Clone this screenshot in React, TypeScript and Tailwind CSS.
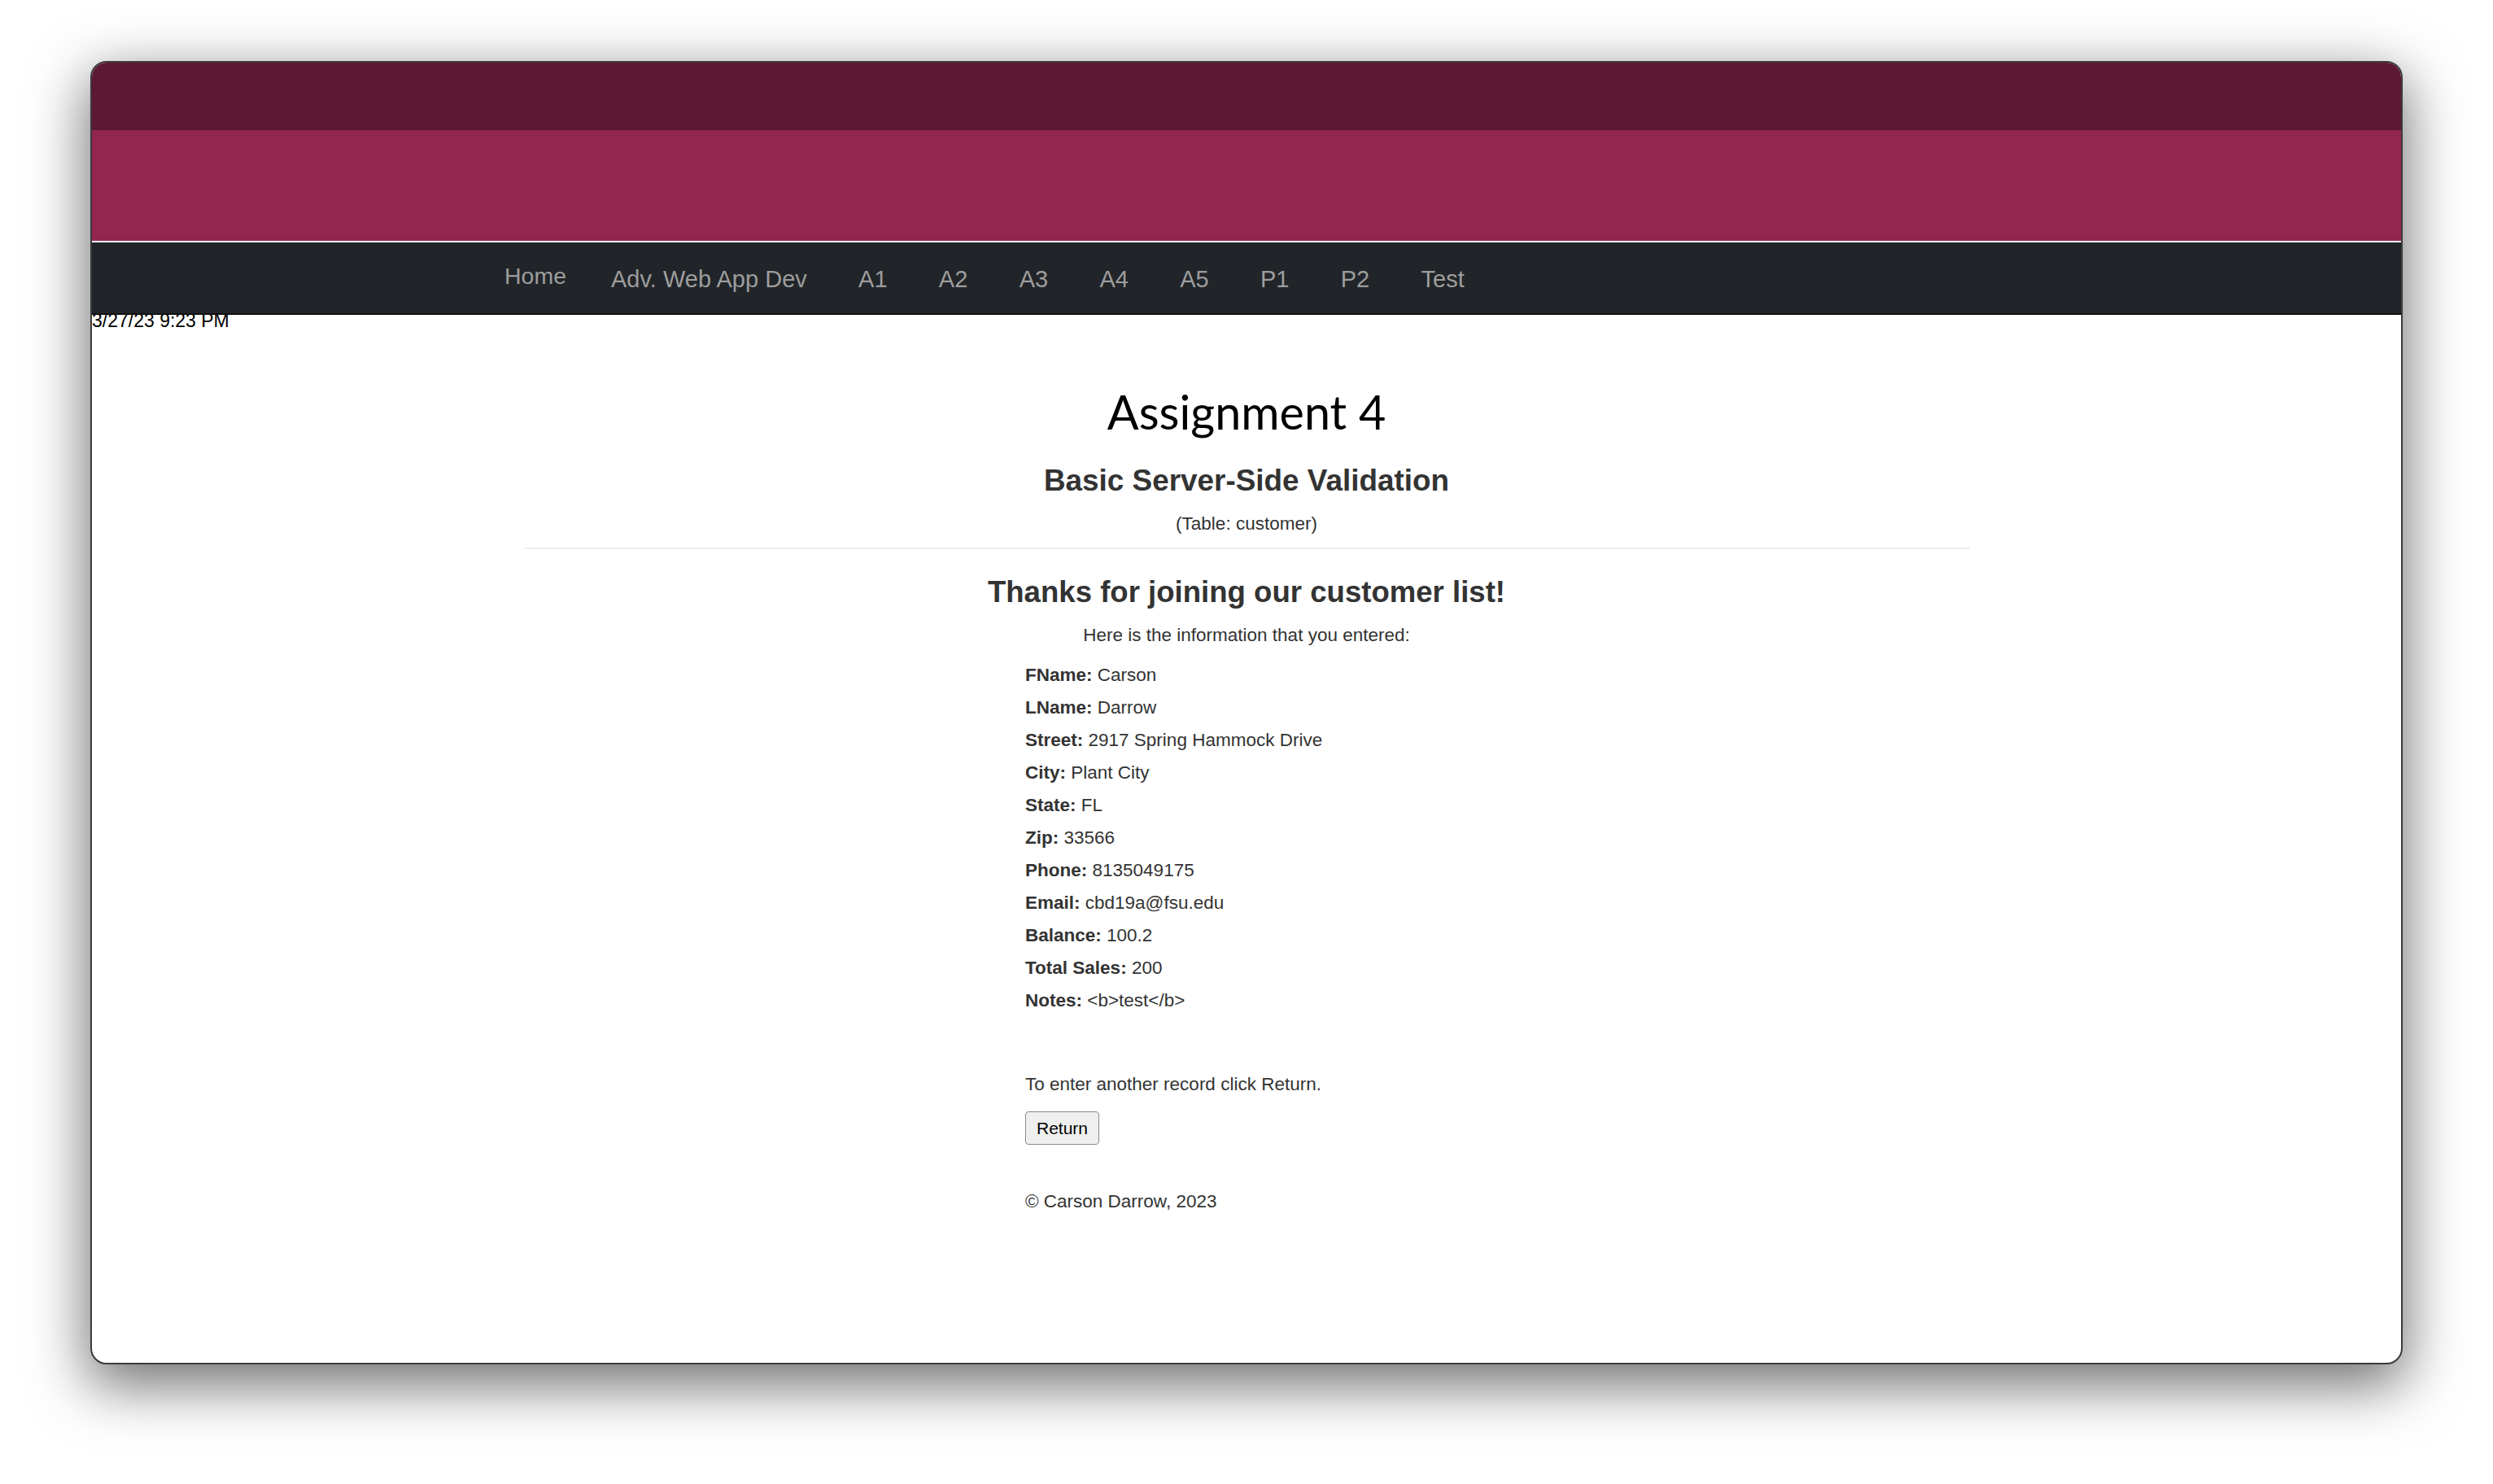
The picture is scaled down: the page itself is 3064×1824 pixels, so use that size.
const links = ["Adv. Web App Dev", "A1", "A2", "A3", "A4", "A5", "P1", "P2", "Test"];

const fields: [string, string][] = [
  ["FName", "Carson"],
  ["LName", "Darrow"],
  ["Street", "2917 Spring Hammock Drive"],
  ["City", "Plant City"],
  ["State", "FL"],
  ["Zip", "33566"],
  ["Phone", "8135049175"],
  ["Email", "cbd19a@fsu.edu"],
  ["Balance", "100.2"],
  ["Total Sales", "200"],
  ["Notes", "<b>test</b>"],
];

export default function App() {
  return (
    <div className="min-h-screen w-full bg-white pt-[75px] font-['Liberation_Sans',Arial,sans-serif]">
      <div className="mx-auto h-[1602px] w-[2842px] overflow-hidden rounded-[20px] border-2 border-[#3b3b3b] bg-white shadow-[0_22px_70px_4px_rgba(0,0,0,0.56)]">
        {/* banner */}
        <div className="h-[83px] bg-[#5d1833]" />
        <div className="h-[138px] border-b-2 border-white bg-[#92264e]" />

        <nav className="relative z-10 flex h-[89px] items-center border-b-2 border-[#111] bg-[#212529] pl-[507px] pt-[3px] text-[29px] leading-none text-[#9d9d9d]">
          <a href="#" className="mr-[55px] pb-[8px] text-[28.5px]">
            Home
          </a>
          <ul className="flex gap-[63.3px]">
            {links.map((l) => (
              <li key={l}>
                <a href="#">{l}</a>
              </li>
            ))}
          </ul>
        </nav>

        <div className="-mt-[4px] text-[23px] leading-[22px] text-black">3/27/23 9:23 PM</div>

        <main className="mx-auto w-[1777px] text-[#333]">
          <h1 className="mt-[66px] text-center font-['Lato',sans-serif] text-[57.5px] leading-[70px] text-black">
            Assignment 4
          </h1>
          <h2 className="mt-[28px] text-center text-[36.9px] font-bold leading-[44px]">
            Basic Server-Side Validation
          </h2>
          <p className="mt-[16px] text-center text-[22.5px] leading-[30px]">(Table: customer)</p>
          <div className="mt-[14px] h-[2px] bg-[#eee]" />

          <h3 className="mt-[31px] text-center text-[36.6px] font-bold leading-[44px]">
            Thanks for joining our customer list!
          </h3>
          <p className="mt-[16px] text-center text-[22.5px] leading-[30px]">
            Here is the information that you entered:
          </p>

          <div className="mx-auto mt-[14px] w-[544px] text-[22.5px]">
            {fields.map(([k, v]) => (
              <div key={k} className="leading-[40px]">
                <b>{k}:</b> {v}
              </div>
            ))}

            <p className="mt-[68px] leading-[30px]">To enter another record click Return.</p>
            <div className="mt-[18px]">
              <button className="h-[41px] rounded-[4px] border border-[#8a8a8a] bg-[#efefef] px-[13px] text-[21px] text-black">
                Return
              </button>
            </div>
            <p className="mt-[55px] leading-[30px]">© Carson Darrow, 2023</p>
          </div>
        </main>
      </div>
    </div>
  );
}
